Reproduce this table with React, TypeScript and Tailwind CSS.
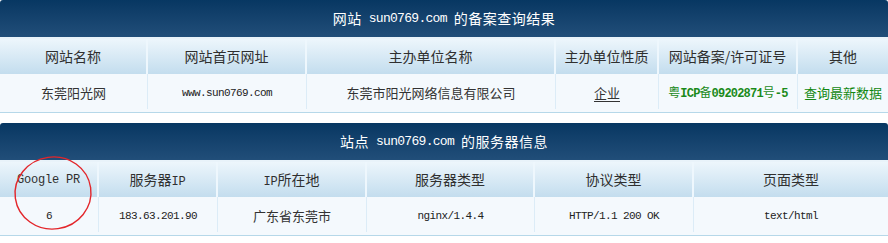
import React from "react";

const cjk = { fontFamily: '"Noto Sans CJK SC", "Liberation Sans", sans-serif' };
const mono = { fontFamily: '"Liberation Mono", "Noto Sans CJK SC", monospace' };

function Mono({ children, className = "" }: { children: React.ReactNode; className?: string }) {
  return (
    <span style={mono} className={className}>
      {children}
    </span>
  );
}

function Block({
  title,
  cols,
  heads,
  cells,
}: {
  title: React.ReactNode;
  cols: string;
  heads: React.ReactNode[];
  cells: React.ReactNode[];
}) {
  return (
    <div className="w-[888px]">
      <div
        className="h-[37px] rounded-t-[3px] bg-gradient-to-b from-[#073762] to-[#214e79] flex items-center justify-center text-white text-[14px]"
        style={cjk}
      >
        {title}
      </div>
      <div className="h-[2px] bg-[#e9f3fa]" />
      <div className={`grid ${cols} h-[35px] bg-gradient-to-b from-[#edf6fc] to-[#c3ddee]`}>
        {heads.map((h, i) => (
          <div
            key={i}
            className={`flex items-center justify-center text-[14px] text-[#2f2f2f] ${
              i < heads.length - 1 ? "border-r-2 border-[#eef7fd]" : ""
            }`}
            style={cjk}
          >
            {h}
          </div>
        ))}
      </div>
      <div className={`grid ${cols} h-[39px] bg-[#f4f9fd] border-b border-[#b6d8e9]`}>
        {cells.map((c, i) => (
          <div key={i} className="flex items-stretch">
            <div className="flex-1 flex items-center justify-center text-[13px] text-[#333]" style={cjk}>
              {c}
            </div>
            {i < cells.length - 1 && <div className="w-px mb-[3px] bg-[#dcecf7]" />}
          </div>
        ))}
      </div>
    </div>
  );
}

const dataMono = "text-[11px] tracking-[-0.6px] text-[#222]";
const headMono = "text-[12px] tracking-[-0.2px]";

export default function App() {
  return (
    <div className="w-[888px] h-[243px] bg-white overflow-hidden relative">
      <Block
        title={
          <span className="tracking-[0.5px] flex items-center">
            网站<Mono className="text-[13px] tracking-[-0.7px] mx-[7px]">sun0769.com</Mono>的备案查询结果
          </span>
        }
        cols="grid-cols-[148px_159px_249px_103px_139px_90px]"
        heads={["网站名称", "网站首页网址", "主办单位名称", "主办单位性质", "网站备案/许可证号", "其他"]}
        cells={[
          "东莞阳光网",
          <Mono className={dataMono}>www.sun0769.com</Mono>,
          "东莞市阳光网络信息有限公司",
          <span className="underline underline-offset-[3px] decoration-1">企业</span>,
          <span className="text-[#1a8a1a] text-[12px]">
            粤<Mono className="tracking-[-0.8px] font-bold">ICP</Mono>备
            <Mono className="tracking-[-0.8px] font-bold">09202871</Mono>号
            <Mono className="tracking-[-0.8px] font-bold">-5</Mono>
          </span>,
          <span className="text-[#118811]">查询最新数据</span>,
        ]}
      />
      <div className="h-[10px]" />
      <Block
        title={
          <span className="tracking-[0.5px] flex items-center">
            站点<Mono className="text-[13px] tracking-[-0.7px] mx-[7px]">sun0769.com</Mono>的服务器信息
          </span>
        }
        cols="grid-cols-[99px_119px_149px_168px_159px_194px]"
        heads={[
          <Mono className={headMono}>Google PR</Mono>,
          <span>
            服务器<Mono className={headMono}>IP</Mono>
          </span>,
          <span>
            <Mono className={headMono}>IP</Mono>所在地
          </span>,
          "服务器类型",
          "协议类型",
          "页面类型",
        ]}
        cells={[
          <Mono className={dataMono}>6</Mono>,
          <Mono className={dataMono}>183.63.201.90</Mono>,
          "广东省东莞市",
          <Mono className={dataMono}>nginx/1.4.4</Mono>,
          <Mono className={dataMono}>HTTP/1.1 200 OK</Mono>,
          <Mono className={dataMono}>text/html</Mono>,
        ]}
      />
      <svg className="absolute left-0 top-0 pointer-events-none" width="888" height="243">
        <ellipse cx="53" cy="193" rx="38" ry="36" fill="none" stroke="#e3262b" strokeWidth="1.4" transform="rotate(-8 53 193)" />
      </svg>
    </div>
  );
}
